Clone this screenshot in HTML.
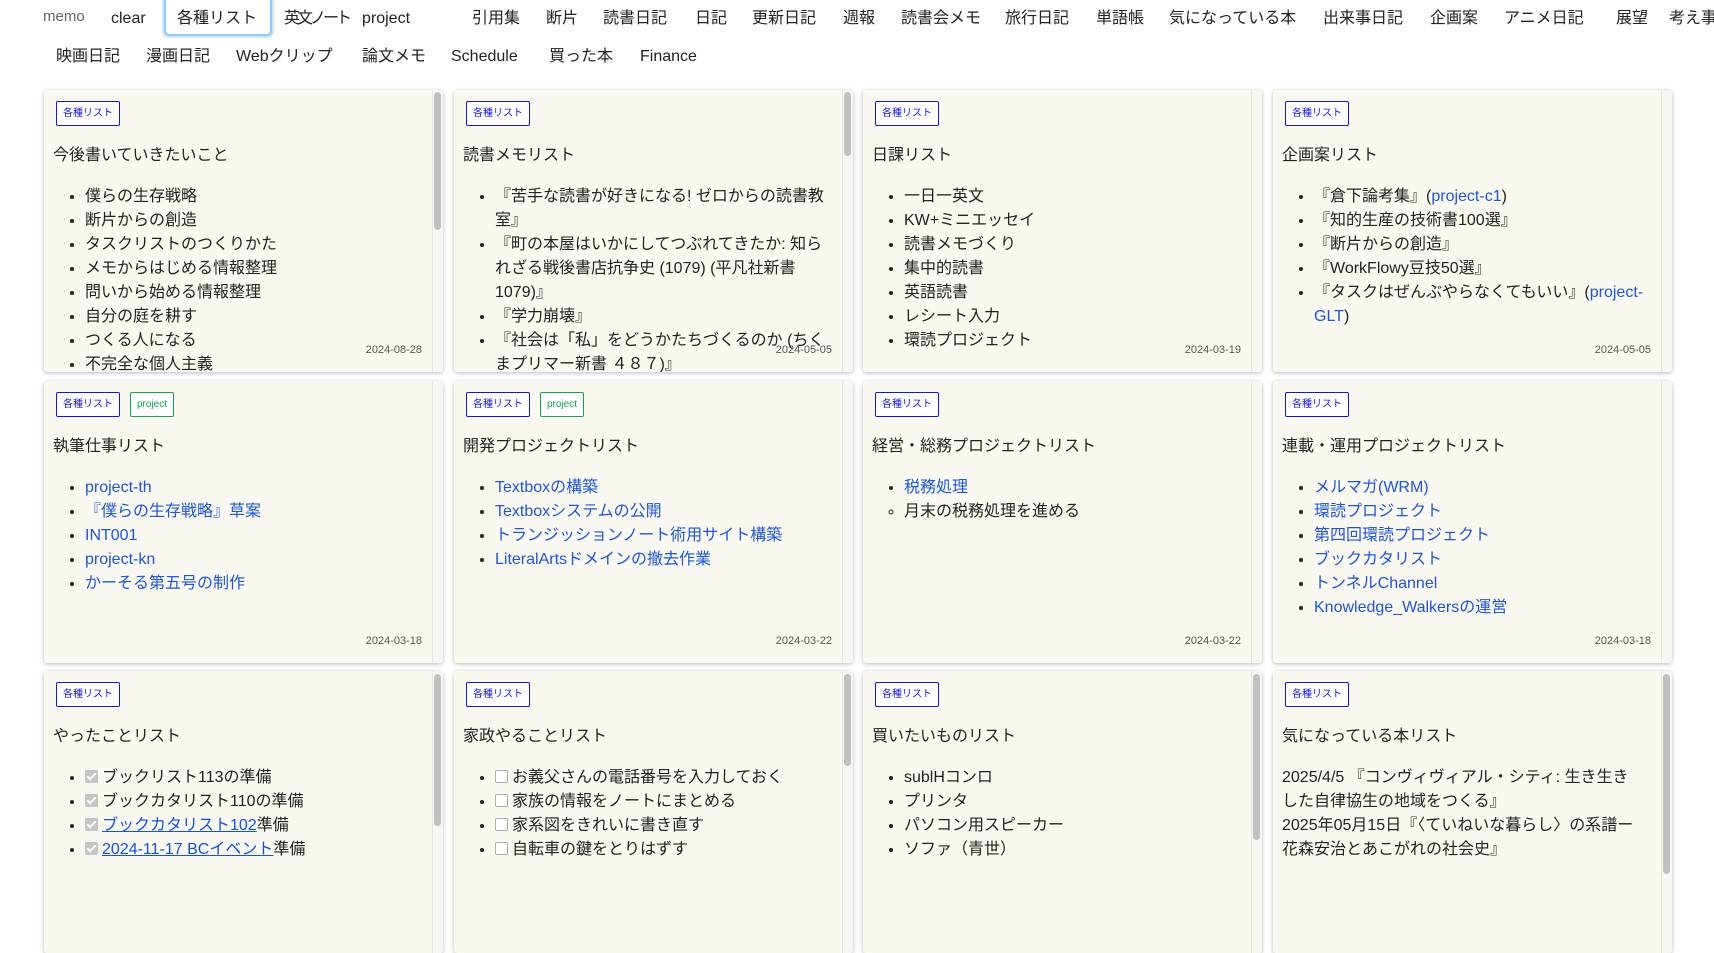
<!DOCTYPE html>
<html><head><meta charset="utf-8"><style>
*{box-sizing:border-box;margin:0;padding:0}
body{width:1714px;height:849px;overflow:hidden;background:#fff;font-family:"Liberation Sans","Noto Sans CJK JP",sans-serif;color:#222;position:relative}
.n{position:absolute;font-size:16px;line-height:20px;white-space:nowrap;color:#222}
.memo{color:#666;font-size:15px}
.sel{position:absolute;left:164px;top:-4px;width:108px;height:40px;border:2px solid #93c9f7;border-radius:5px;box-shadow:0 0 0 2px #cfe6fb}
.card{position:absolute;width:399px;height:282px;background:#f9f8f1;box-shadow:0 1px 4px rgba(0,0,0,.28);border-radius:3px;overflow:hidden}
.strip{position:absolute;right:0;top:0;width:11px;height:100%;background:#f6f6f3;border-left:1px solid #e6e6e2}
.thumb{position:absolute;right:2px;width:7px;background:#c0c0c0;border-radius:4px}
.tags{position:absolute;left:12px;top:11px;display:flex;gap:10px}
.tag{height:25px;border:1px solid #1515e0;color:#1515e0;font-size:10px;line-height:23px;padding:0 6px;border-radius:2px;background:#fff}
.tag.g{border-color:#1aa053;color:#1aa053}
.title{position:absolute;left:9px;top:54px;font-size:16px;line-height:24px}
.body{position:absolute;left:9px;top:95px;width:360px;font-size:16px;line-height:24px}
ul{padding-left:32px}
li{list-style:disc}
li.c{list-style:circle}
a{color:#1f55d6;text-decoration:none}
a.u{text-decoration:underline;color:#1550e0}
.date{position:absolute;right:21px;top:254px;font-size:11px;color:#555}
.cb{display:inline-block;width:13px;height:13px;border-radius:2px;vertical-align:-1px;margin-right:4px}
.cb.on{background:#c4c4c4;position:relative}
.cb.on:after{content:"";position:absolute;left:4px;top:1px;width:3px;height:7px;border:solid #fff;border-width:0 2px 2px 0;transform:rotate(45deg)}
.cb.off{background:#fff;border:1px solid #aaa}
</style></head><body>
<span class="n memo" style="left:43px;top:7px">memo</span>
<span class="n" style="left:111px;top:9px">clear</span>
<div class="sel"></div>
<span class="n" style="left:177px;top:9px">各種リスト</span>
<span class="n" style="left:284px;top:9px;letter-spacing:-3px">英文ノート</span>
<span class="n" style="left:362px;top:9px">project</span>
<span class="n" style="left:472px;top:9px">引用集</span>
<span class="n" style="left:546px;top:9px">断片</span>
<span class="n" style="left:603px;top:9px">読書日記</span>
<span class="n" style="left:695px;top:9px">日記</span>
<span class="n" style="left:752px;top:9px">更新日記</span>
<span class="n" style="left:843px;top:9px">週報</span>
<span class="n" style="left:901px;top:9px">読書会メモ</span>
<span class="n" style="left:1005px;top:9px">旅行日記</span>
<span class="n" style="left:1096px;top:9px">単語帳</span>
<span class="n" style="left:1169px;top:9px">気になっている本</span>
<span class="n" style="left:1323px;top:9px">出来事日記</span>
<span class="n" style="left:1430px;top:9px">企画案</span>
<span class="n" style="left:1504px;top:9px">アニメ日記</span>
<span class="n" style="left:1616px;top:9px">展望</span>
<span class="n" style="left:1669px;top:9px">考え事</span>
<span class="n" style="left:56px;top:47px">映画日記</span>
<span class="n" style="left:146px;top:47px">漫画日記</span>
<span class="n" style="left:236px;top:47px">Webクリップ</span>
<span class="n" style="left:362px;top:47px">論文メモ</span>
<span class="n" style="left:451px;top:47px">Schedule</span>
<span class="n" style="left:549px;top:47px">買った本</span>
<span class="n" style="left:640px;top:47px">Finance</span>

<!-- row 1 -->
<div class="card" style="left:44px;top:90px"><div class="strip"><div class="thumb" style="top:2px;height:138px"></div></div>
<div class="tags"><span class="tag">各種リスト</span></div><div class="title">今後書いていきたいこと</div>
<div class="body"><ul><li>僕らの生存戦略</li><li>断片からの創造</li><li>タスクリストのつくりかた</li><li>メモからはじめる情報整理</li><li>問いから始める情報整理</li><li>自分の庭を耕す</li><li>つくる人になる</li><li>不完全な個人主義</li></ul></div>
<div class="date">2024-08-28</div></div>

<div class="card" style="left:454px;top:90px"><div class="strip"><div class="thumb" style="top:2px;height:64px"></div></div>
<div class="tags"><span class="tag">各種リスト</span></div><div class="title">読書メモリスト</div>
<div class="body" style="width:362px"><ul><li>『苦手な読書が好きになる! ゼロからの読書教室』</li><li>『町の本屋はいかにしてつぶれてきたか: 知られざる戦後書店抗争史 (1079) (平凡社新書 1079)』</li><li>『学力崩壊』</li><li>『社会は「私」をどうかたちづくるのか (ちくまプリマー新書 ４８７)』</li></ul></div>
<div class="date">2024-05-05</div></div>

<div class="card" style="left:863px;top:90px"><div class="strip"></div>
<div class="tags"><span class="tag">各種リスト</span></div><div class="title">日課リスト</div>
<div class="body"><ul><li>一日一英文</li><li>KW+ミニエッセイ</li><li>読書メモづくり</li><li>集中的読書</li><li>英語読書</li><li>レシート入力</li><li>環読プロジェクト</li></ul></div>
<div class="date">2024-03-19</div></div>

<div class="card" style="left:1273px;top:90px"><div class="strip"></div>
<div class="tags"><span class="tag">各種リスト</span></div><div class="title">企画案リスト</div>
<div class="body" style="width:362px"><ul><li>『倉下論考集』(<a>project-c1</a>)</li><li>『知的生産の技術書100選』</li><li>『断片からの創造』</li><li>『WorkFlowy豆技50選』</li><li>『タスクはぜんぶやらなくてもいい』(<a>project-GLT</a>)</li></ul></div>
<div class="date">2024-05-05</div></div>

<!-- row 2 -->
<div class="card" style="left:44px;top:381px"><div class="strip"></div>
<div class="tags"><span class="tag">各種リスト</span><span class="tag g">project</span></div><div class="title">執筆仕事リスト</div>
<div class="body"><ul><li><a>project-th</a></li><li><a>『僕らの生存戦略』草案</a></li><li><a>INT001</a></li><li><a>project-kn</a></li><li><a>かーそる第五号の制作</a></li></ul></div>
<div class="date">2024-03-18</div></div>

<div class="card" style="left:454px;top:381px"><div class="strip"></div>
<div class="tags"><span class="tag">各種リスト</span><span class="tag g">project</span></div><div class="title">開発プロジェクトリスト</div>
<div class="body"><ul><li><a>Textboxの構築</a></li><li><a>Textboxシステムの公開</a></li><li><a>トランジッションノート術用サイト構築</a></li><li><a>LiteralArtsドメインの撤去作業</a></li></ul></div>
<div class="date">2024-03-22</div></div>

<div class="card" style="left:863px;top:381px"><div class="strip"></div>
<div class="tags"><span class="tag">各種リスト</span></div><div class="title">経営・総務プロジェクトリスト</div>
<div class="body"><ul><li><a>税務処理</a></li><li class="c">月末の税務処理を進める</li></ul></div>
<div class="date">2024-03-22</div></div>

<div class="card" style="left:1273px;top:381px"><div class="strip"></div>
<div class="tags"><span class="tag">各種リスト</span></div><div class="title">連載・運用プロジェクトリスト</div>
<div class="body"><ul><li><a>メルマガ(WRM)</a></li><li><a>環読プロジェクト</a></li><li><a>第四回環読プロジェクト</a></li><li><a>ブックカタリスト</a></li><li><a>トンネルChannel</a></li><li><a>Knowledge_Walkersの運営</a></li></ul></div>
<div class="date">2024-03-18</div></div>

<!-- row 3 -->
<div class="card" style="left:44px;top:671px"><div class="strip"><div class="thumb" style="top:3px;height:152px"></div></div>
<div class="tags"><span class="tag">各種リスト</span></div><div class="title">やったことリスト</div>
<div class="body"><ul><li><span class="cb on"></span>ブックリスト113の準備</li><li><span class="cb on"></span>ブックカタリスト110の準備</li><li><span class="cb on"></span><a class="u">ブックカタリスト102</a>準備</li><li><span class="cb on"></span><a class="u">2024-11-17 BCイベント</a>準備</li></ul></div></div>

<div class="card" style="left:454px;top:671px"><div class="strip"><div class="thumb" style="top:3px;height:92px"></div></div>
<div class="tags"><span class="tag">各種リスト</span></div><div class="title">家政やることリスト</div>
<div class="body"><ul><li><span class="cb off"></span>お義父さんの電話番号を入力しておく</li><li><span class="cb off"></span>家族の情報をノートにまとめる</li><li><span class="cb off"></span>家系図をきれいに書き直す</li><li><span class="cb off"></span>自転車の鍵をとりはずす</li></ul></div></div>

<div class="card" style="left:863px;top:671px"><div class="strip"><div class="thumb" style="top:3px;height:166px"></div></div>
<div class="tags"><span class="tag">各種リスト</span></div><div class="title">買いたいものリスト</div>
<div class="body"><ul><li>sublHコンロ</li><li>プリンタ</li><li>パソコン用スピーカー</li><li>ソファ（青世）</li></ul></div></div>

<div class="card" style="left:1273px;top:671px"><div class="strip"><div class="thumb" style="top:3px;height:200px"></div></div>
<div class="tags"><span class="tag">各種リスト</span></div><div class="title">気になっている本リスト</div>
<div class="body" style="width:352px">2025/4/5 『コンヴィヴィアル・シティ: 生き生きした自律協生の地域をつくる』<br>2025年05月15日『〈ていねいな暮らし〉の系譜ー花森安治とあこがれの社会史』</div></div>
</body></html>
